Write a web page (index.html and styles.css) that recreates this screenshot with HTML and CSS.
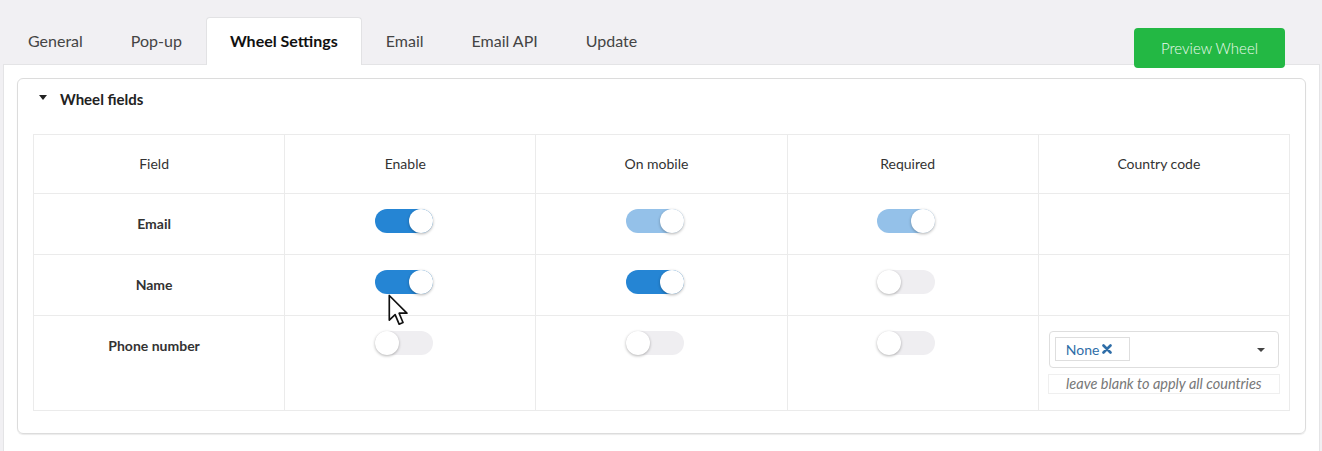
FILE: index.html
```
<!DOCTYPE html>
<html>
	<head>
		<meta charset="UTF-8">
		<title>Wheel Settings</title>
		<link rel="stylesheet" href="styles.css">
	</head>

	<body>
		<div class='tabs'>
			<a class='tab'>General</a>
			<a class='tab'>Pop-up</a>
			<a class='tab active'>Wheel Settings</a>
			<a class='tab'>Email</a>
			<a class='tab'>Email API</a>
			<a class='tab'>Update</a>
			<button class='preview'>Preview Wheel</button>
		</div>

		<div class='panel'>
			<div class='card'>
				<div class='card-head'><span class='caret'></span>Wheel fields</div>

				<table class='fields'>
					<tr>
						<th>Field</th>
						<th>Enable</th>
						<th>On mobile</th>
						<th>Required</th>
						<th>Country code</th>
					</tr>
					<tr>
						<td class='name'>Email</td>
						<td><span class='switch on'></span></td>
						<td><span class='switch on faded'></span></td>
						<td><span class='switch on faded'></span></td>
						<td></td>
					</tr>
					<tr>
						<td class='name'>Name</td>
						<td class='cursor-cell'><span class='switch on'></span>
							<svg class='cursor' width='22' height='34' viewBox='0 0 17 26'>
								<path d='M1 1 L1 20 L5.5 15.8 L8.6 23.2 L11.6 21.9 L8.6 14.7 L14.6 14.7 Z' fill='#fff' stroke='#111' stroke-width='1.3' stroke-linejoin='round'/>
							</svg>
						</td>
						<td><span class='switch on'></span></td>
						<td><span class='switch'></span></td>
						<td></td>
					</tr>
					<tr>
						<td class='name'>Phone number</td>
						<td><span class='switch'></span></td>
						<td><span class='switch'></span></td>
						<td><span class='switch'></span></td>
						<td class='country'>
							<div class='select'>
								<span class='tag'>None <svg width='10' height='10' viewBox='0 0 10 10'><path d='M1.5 1.5 L8.5 8.5 M8.5 1.5 L1.5 8.5' stroke='#2f6ea8' stroke-width='2.6' stroke-linecap='round'/></svg></span>
								<span class='select-caret'></span>
							</div>
							<div class='hint'>leave blank to apply all countries</div>
						</td>
					</tr>
				</table>
			</div>
		</div>
	</body>
</html>
```

FILE: styles.css
```
body {
	margin: 0;
	background-color: #f1f0f3;
	font-family: Lato, "Open Sans", sans-serif;
	color: #333;
	height: 451px;
	overflow: hidden;
}

.tabs {
	display: flex;
	align-items: flex-start;
	height: 47px;
	padding: 17px 0 0 4px;
}

.tab {
	display: block;
	height: 47px;
	line-height: 46px;
	padding: 0 23px;
	border: 1px solid transparent;
	border-bottom: none;
	box-sizing: border-box;
	font-size: 16px;
	color: #444;
}

.tab.active {
	background-color: #fff;
	border-color: #e2e2e4;
	border-radius: 4px 4px 0 0;
	font-weight: bold;
	color: #111;
	height: 48px;
	position: relative;
	z-index: 1;
}

button.preview {
	margin: 11px 37px 0 auto;
	width: 151px;
	height: 40px;
	background-color: #23b844;
	border: none;
	border-radius: 4px;
	color: #eefaf0;
	font-family: Lato, sans-serif;
	font-size: 15px;
	font-weight: 300;
	position: relative;
	z-index: 1;
}

.panel {
	margin: 0 2px 0 3px;
	background-color: #fff;
	border: 1px solid #e4e4e6;
	border-bottom: none;
	padding: 13px 13px 0;
	height: 373px;
}

.card {
	border: 1px solid #dcdcdc;
	border-radius: 6px;
	box-shadow: 0 1px 1px rgba(0, 0, 0, 0.08);
	padding: 0 15px 22px;
}

.card-head {
	display: flex;
	align-items: center;
	height: 41px;
	padding: 0 0 2px 6px;
	box-sizing: border-box;
	font-size: 15px;
	font-weight: bold;
	color: #222;
}

.caret {
	width: 0;
	height: 0;
	border-left: 4.5px solid transparent;
	border-right: 4.5px solid transparent;
	border-top: 5px solid #222;
	margin-right: 13px;
	margin-bottom: 2px;
}

table.fields {
	width: 100%;
	margin-top: 14px;
	border-collapse: collapse;
	table-layout: fixed;
	font-size: 14px;
}

table.fields th,
table.fields td {
	border: 1px solid #ebebeb;
	text-align: center;
}

table.fields th {
	height: 56px;
	font-weight: normal;
	color: #333;
	padding: 0 10px 2px 0;
}

table.fields td {
	vertical-align: top;
	padding: 15px 12px 13px 2px;
	height: 32px;
}

table.fields td.name {
	line-height: 32px;
	padding-top: 14px;
	padding-bottom: 14px;
	font-weight: bold;
	color: #333;
}

.switch {
	display: inline-block;
	position: relative;
	width: 58px;
	height: 24px;
	border-radius: 12px;
	background-color: #efeef1;
	margin-right: 3px;
}

.switch::after {
	content: '';
	position: absolute;
	top: 0;
	left: 0;
	width: 24px;
	height: 24px;
	border-radius: 12px;
	background-color: #fff;
	box-shadow: 0 1px 3px rgba(0, 0, 0, 0.3);
}

.switch.on { background-color: #2585d4 }
.switch.on.faded { background-color: #94c1e9 }
.switch.on::after { left: 34px }

.cursor-cell { position: relative }

svg.cursor {
	position: absolute;
	left: 103px;
	top: 39px;
}

table.fields td.country {
	padding: 15px 10px 16px 10px;
	text-align: left;
}

.select {
	position: relative;
	height: 37px;
	box-sizing: border-box;
	border: 1px solid #dedede;
	border-radius: 4px;
	padding: 5px;
}

.tag {
	display: inline-flex;
	align-items: center;
	gap: 3px;
	height: 24px;
	box-sizing: border-box;
	border: 1px solid #dedede;
	padding: 0 17px 0 10px;
	font-size: 14px;
	color: #2f6ea8;
}

.select-caret {
	position: absolute;
	right: 13px;
	top: 16px;
	width: 0;
	height: 0;
	border-left: 4px solid transparent;
	border-right: 4px solid transparent;
	border-top: 4px solid #444;
}

.hint {
	margin: 6px -1px 0;
	height: 20px;
	line-height: 18px;
	box-sizing: border-box;
	border: 1px solid #efefef;
	text-align: center;
	font-size: 14.5px;
	font-style: italic;
	color: #777;
}
```
